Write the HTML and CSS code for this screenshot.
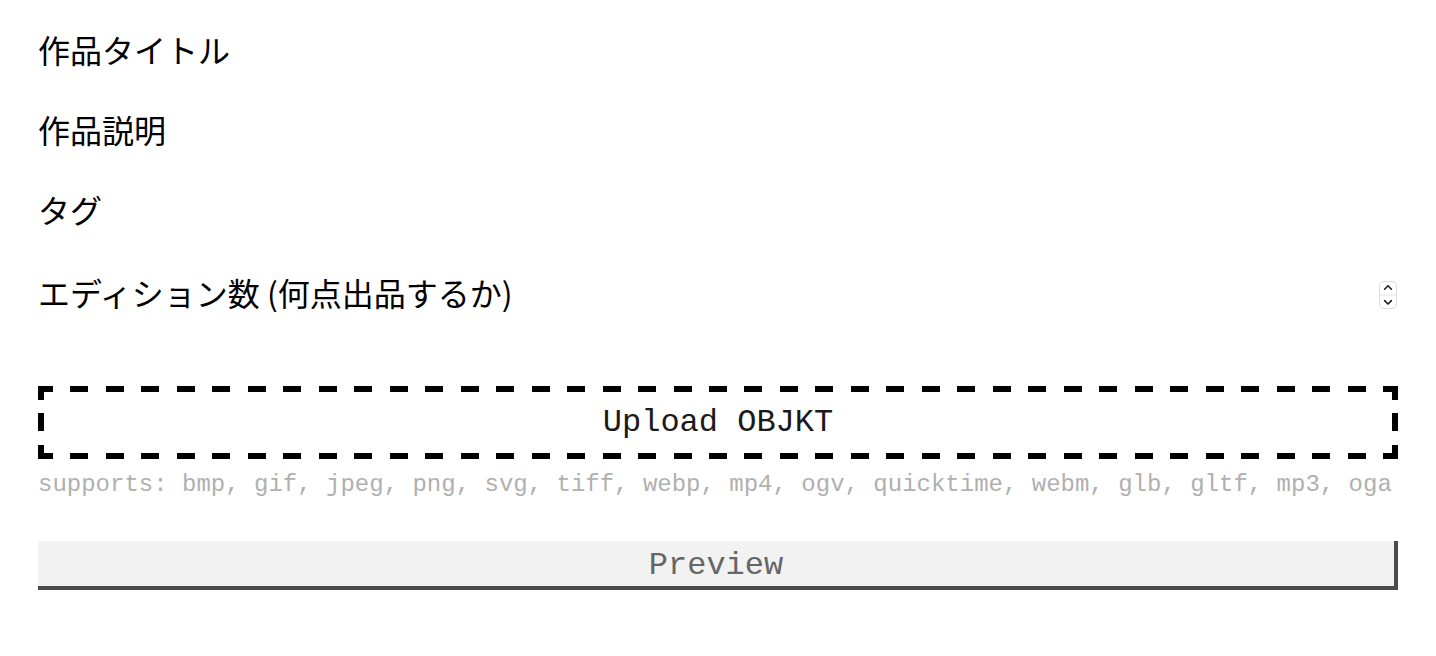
FILE: index.html
```html
<!DOCTYPE html>
<html lang="ja">
<head>
<meta charset="utf-8">
<link rel="stylesheet" href="styles.css">
</head>
<body>
<div class="container">
  <div class="field"><input class="text-input" type="text" placeholder="作品タイトル"></div>
  <div class="field"><input class="text-input" type="text" placeholder="作品説明"></div>
  <div class="field"><input class="text-input" type="text" placeholder="タグ"></div>
  <div class="field field-num">
    <input class="text-input" type="number" placeholder="エディション数 (何点出品するか)">
    <span class="spinner" aria-hidden="true">
      <svg width="18" height="28" viewBox="0 0 18 28">
        <rect x="0.5" y="0.5" width="17" height="27" rx="4.5" fill="#fff" stroke="#dcdcdc"/>
        <line x1="1" y1="14" x2="17" y2="14" stroke="#e2e2e2"/>
        <path d="M5.6 8.2 L9 4.8 L12.4 8.2" fill="none" stroke="#1e1e1e" stroke-width="1.6" stroke-linecap="round" stroke-linejoin="round"/>
        <path d="M5.6 19.6 L9 23 L12.4 19.6" fill="none" stroke="#1e1e1e" stroke-width="1.6" stroke-linecap="round" stroke-linejoin="round"/>
      </svg>
    </span>
  </div>
  <div class="upload">Upload OBJKT</div>
  <p class="supports">supports: bmp, gif, jpeg, png, svg, tiff, webp, mp4, ogv, quicktime, webm, glb, gltf, mp3, oga</p>
  <button class="preview">Preview</button>
</div>
</body>
</html>
```

FILE: styles.css
```css
html, body {
  margin: 0;
  padding: 0;
  background: #fff;
}
.container {
  padding: 9px 38px 0 38px;
}
.field {
  height: 80px;
  display: flex;
  align-items: center;
}
.field-num {
  height: 86px;
  position: relative;
}
.text-input {
  width: 100%;
  box-sizing: border-box;
  border: none;
  outline: none;
  background: transparent;
  padding: 0;
  margin: 0;
  height: 40px;
  font-family: "Noto Sans CJK JP", "Liberation Sans", sans-serif;
  font-size: 32px;
  color: #000;
  -moz-appearance: textfield;
}
.text-input::-webkit-inner-spin-button,
.text-input::-webkit-outer-spin-button {
  -webkit-appearance: none;
  margin: 0;
}
.text-input::placeholder {
  color: #000;
  opacity: 1;
}
.spinner {
  position: absolute;
  right: 1px;
  top: 32px;
  width: 18px;
  height: 28px;
  display: block;
  filter: drop-shadow(0 0.5px 0.5px rgba(0,0,0,0.08));
}
.spinner svg {
  display: block;
}
.upload {
  margin-top: 51px;
  height: 73px;
  box-sizing: border-box;
  border: none;
  background-image:
    repeating-linear-gradient(to right, #000 0 15px, transparent 15px 32.474px, #000 32.474px 35.474px),
    repeating-linear-gradient(to right, #000 0 15px, transparent 15px 32.474px, #000 32.474px 35.474px),
    repeating-linear-gradient(to bottom, #000 0 14px, transparent 14px 27.5px, #000 27.5px 31.5px),
    repeating-linear-gradient(to bottom, #000 0 14px, transparent 14px 27.5px, #000 27.5px 31.5px);
  background-size: 100% 6px, 100% 6px, 6px 100%, 6px 100%;
  background-position: left top, left bottom, left top, right top;
  background-repeat: no-repeat;
  display: flex;
  align-items: center;
  justify-content: center;
  font-family: "Liberation Mono", monospace;
  font-size: 32px;
  color: #1a1a1a;
}
.supports {
  margin: 12px 0 0 0;
  font-family: "Liberation Mono", monospace;
  font-size: 24px;
  color: #b0b0b0;
  white-space: nowrap;
  overflow: hidden;
}
.preview {
  display: block;
  margin-top: 43px;
  width: 100%;
  height: 49px;
  box-sizing: border-box;
  border: none;
  border-right: 4px solid #4b4b4b;
  border-bottom: 4px solid #4b4b4b;
  background: #f2f2f2;
  font-family: "Liberation Mono", monospace;
  font-size: 32px;
  color: #666;
  padding: 3px 0 0 0;
}
```
